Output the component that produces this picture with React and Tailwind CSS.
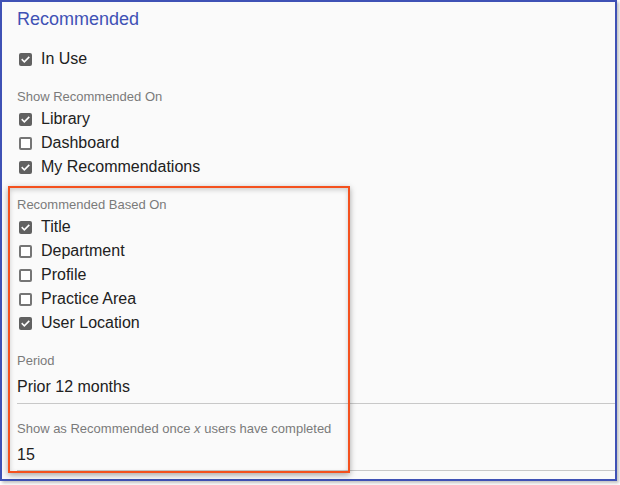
import React from 'react';

function Box({ checked }) {
  if (checked) {
    return (
      <span className="w-[13px] h-[13px] rounded-[2px] bg-[#616161] flex items-center justify-center shrink-0">
        <svg width="11" height="11" viewBox="0 0 24 24" fill="none" stroke="#fff" strokeWidth="3.5" strokeLinecap="square">
          <path d="M5 12.5l4.5 4.5L19 7.5" />
        </svg>
      </span>
    );
  }
  return <span className="w-[13px] h-[13px] rounded-[2px] border-2 border-[#757575] bg-white shrink-0" />;
}

function Check({ label, checked }) {
  return (
    <div className="h-6 flex items-center pl-[2px]">
      <Box checked={checked} />
      <span className="ml-[9px] text-[16px] text-[#212121]">{label}</span>
    </div>
  );
}

function Caption({ children, className = '' }) {
  return <div className={`h-4 leading-4 text-[13px] text-[#7a7a7a] ${className}`}>{children}</div>;
}

export default function App() {
  return (
    <div className="bg-white w-[620px] h-[485px]" style={{ fontFamily: '"Liberation Sans", Arial, sans-serif' }}>
      <div className="relative w-[617px] h-[481px] border-2 border-[#3f51b5] bg-[#fafafa] shadow-[2px_2px_3px_rgba(0,0,0,0.25)] pl-[15px] pt-[5px]">
        <div className="h-6 leading-6 text-[18px] text-[#3f51b5]">Recommended</div>

        <div className="mt-4">
          <Check label="In Use" checked />
        </div>

        <Caption className="mt-[18px]">Show Recommended On</Caption>
        <div className="mt-[2px]">
          <Check label="Library" checked />
          <Check label="Dashboard" />
          <Check label="My Recommendations" checked />
        </div>

        <Caption className="mt-[18px]">Recommended Based On</Caption>
        <div className="mt-[2px]">
          <Check label="Title" checked />
          <Check label="Department" />
          <Check label="Profile" />
          <Check label="Practice Area" />
          <Check label="User Location" checked />
        </div>

        <Caption className="mt-[18px]">Period</Caption>
        <div className="mt-[6px] pb-[4px] border-b border-[#c8c8c8]">
          <div className="h-6 leading-6 text-[16px] text-[#212121]">Prior 12 months</div>
        </div>

        <Caption className="mt-[17px]">
          Show as Recommended once <i>x</i> users have completed
        </Caption>
        <div className="mt-[6px] pb-[3px] border-b border-[#c8c8c8]">
          <div className="h-6 leading-6 text-[16px] text-[#212121]">15</div>
        </div>

        <div className="absolute left-[6px] top-[184px] w-[342px] h-[287px] border-2 border-[#f4511e] pointer-events-none shadow-[0_2px_6px_rgba(0,0,0,0.35),inset_0_2px_5px_rgba(0,0,0,0.18)]" />
      </div>
    </div>
  );
}
